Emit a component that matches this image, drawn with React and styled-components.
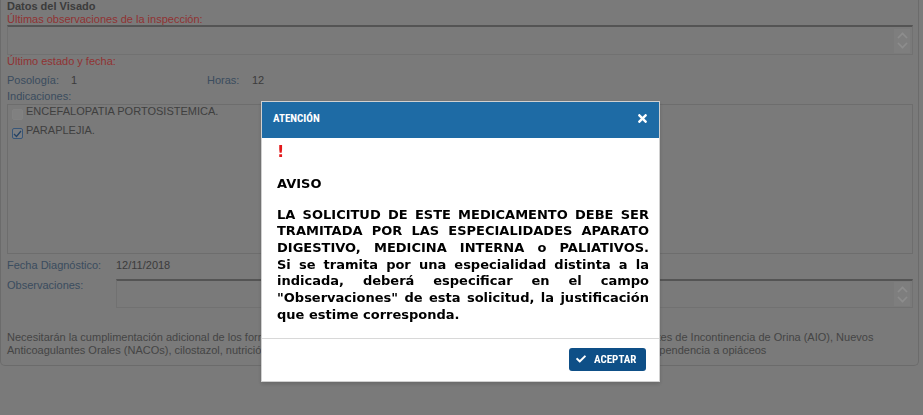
import React from 'react'
import styled, { createGlobalStyle } from 'styled-components'
import { FaTimes, FaCheck } from 'react-icons/fa'

const GlobalStyle = createGlobalStyle`
  html, body {
    margin: 0;
    padding: 0;
    background: #cbcbcb;
  }
  body {
    font-family: "Liberation Sans", Arial, sans-serif;
    font-size: 11px;
  }
  * { box-sizing: border-box; }
`

// page under the overlay
const Panel = styled.div`
  margin-right: 4px;
  border: 1px solid #b3b3b3;
  border-top: none;
  border-radius: 0 0 5px 5px;
  padding: 0 5px 8px 6px;
`

const Title = styled.div`
  font-weight: bold;
  color: #646464;
  line-height: 12px;
  margin-bottom: 1px;
`

const RedLabel = styled.div`
  color: #f05656;
  line-height: ${p => p.$lh || 13}px;
`

const TextBox = styled.div`
  height: ${p => p.$h}px;
  border: 1px solid #bdbdbd;
  border-top: 2px solid #8c8c8c;
  display: flex;
  justify-content: flex-end;
  align-items: center;
  padding: 0 2px;
`

const ScrollArrows = styled.div`
  width: 16px;
  height: 24px;
  background: #d3d3d3;
  display: flex;
  flex-direction: column;
  align-items: center;
  justify-content: center;
  gap: 3px;
  color: #ececec;
`

const Row = styled.div`
  display: flex;
  line-height: 13px;
  margin-top: ${p => p.$mt || 0}px;
`

const Cell = styled.span`
  width: ${p => (p.$w ? `${p.$w}px` : 'auto')};
  color: ${p => (p.$label ? '#63809e' : '#656565')};
`

const BlueLabel = styled.div`
  color: #63809e;
  line-height: 13px;
  margin-top: ${p => p.$mt || 0}px;
`

const IndicBox = styled.div`
  height: 150px;
  margin-top: 1px;
  border: 1px solid #b6b6b6;
  padding: 0 4px;
`

const Item = styled.div`
  display: flex;
  gap: 3px;
  height: 19px;
  line-height: 13px;
  color: #6a6a6a;
`

const Check = styled.span`
  width: 11px;
  height: 11px;
  margin-top: 4px;
  border-radius: 2px;
  border: 1px solid ${p => (p.$checked ? '#5e8fc8' : '#d9d9d9')};
  background: ${p => (p.$checked ? '#cfd3d8' : '#d6d6d6')};
  display: flex;
  align-items: center;
  justify-content: center;
  color: #3e6ea6;
`

const FormGrid = styled.div`
  display: grid;
  grid-template-columns: 109px 1fr;
  line-height: 13px;
  margin-top: ${p => p.$mt || 0}px;
`

const Note = styled.div`
  margin-top: 23px;
  line-height: 13px;
  color: #737373;
`

// modal
const Overlay = styled.div`
  position: fixed;
  inset: 0;
  background: rgba(0, 0, 0, 0.4);
`

const Modal = styled.div`
  position: absolute;
  left: 261px;
  top: 101px;
  width: 399px;
  background: #fff;
  border: 1px solid #d0d0d0;
  box-shadow: 0 2px 4px rgba(0, 0, 0, 0.15);
`

const Header = styled.div`
  height: 36px;
  background: #1e6ba5;
  color: #fff;
  display: flex;
  align-items: center;
  justify-content: space-between;
  padding: 0 10px 3px 11px;
`

const HeaderTitle = styled.span`
  font-family: "Liberation Sans Narrow", "Roboto Condensed", Roboto, sans-serif;
  font-weight: bold;
  font-size: 11px;
  line-height: 13px;
`

const Body = styled.div`
  padding: 5px 10px 14px 15px;
  border-bottom: 1px solid #d8d8d8;
  font-family: "DejaVu Sans", Verdana, sans-serif;
  font-weight: bold;
  font-size: 13px;
  line-height: 16.7px;
  color: #000;
`

const Bang = styled.div`
  font-family: "DejaVu Sans", Verdana, sans-serif;
  font-weight: bold;
  font-size: 16px;
  line-height: 18px;
  color: #e3191b;
`

const Aviso = styled.div`
  margin-top: 14.6px;
`

const Message = styled.p`
  margin: ${p => (p.$first ? '14.3px' : '0')} 0 0;
  text-align: justify;
  text-align-last: ${p => (p.$first ? 'justify' : 'auto')};
`

const Footer = styled.div`
  display: flex;
  justify-content: flex-end;
  padding: 9px 13px 10px;
`

const Button = styled.button`
  width: 77px;
  height: 23px;
  border: none;
  border-radius: 3px;
  background: #0e4f87;
  color: #fff;
  display: flex;
  align-items: center;
  gap: 8px;
  padding: 0 0 0 7px;
  font-family: "Liberation Sans Narrow", "Roboto Condensed", Roboto, sans-serif;
  font-weight: bold;
  font-size: 11px;
`

const Chevron = ({ up }) => (
  <svg width="11" height="7" viewBox="0 0 11 7">
    <polyline
      points={up ? '1,6 5.5,1.5 10,6' : '1,1 5.5,5.5 10,1'}
      fill="none"
      stroke="currentColor"
      strokeWidth="1.6"
    />
  </svg>
)

const Arrows = () => (
  <ScrollArrows>
    <Chevron up />
    <Chevron />
  </ScrollArrows>
)

export default function App() {
  return (
    <>
      <GlobalStyle />
      <Panel>
        <Title>Datos del Visado</Title>
        <RedLabel $lh={12}>Últimas observaciones de la inspección:</RedLabel>
        <TextBox $h={30}><Arrows /></TextBox>
        <RedLabel>Último estado y fecha:</RedLabel>
        <Row $mt={6}>
          <Cell $label $w={64}>Posología:</Cell>
          <Cell $w={136}>1</Cell>
          <Cell $label $w={45}>Horas:</Cell>
          <Cell>12</Cell>
        </Row>
        <BlueLabel $mt={3}>Indicaciones:</BlueLabel>
        <IndicBox>
          <Item>
            <Check />
            <span>ENCEFALOPATIA PORTOSISTEMICA.</span>
          </Item>
          <Item>
            <Check $checked>
              <svg width="9" height="8" viewBox="0 0 9 8">
                <polyline points="1,4 3.5,6.5 8,1" fill="none" stroke="currentColor" strokeWidth="1.3" />
              </svg>
            </Check>
            <span>PARAPLEJIA.</span>
          </Item>
        </IndicBox>
        <FormGrid $mt={5}>
          <Cell $label>Fecha Diagnóstico:</Cell>
          <Cell>12/11/2018</Cell>
        </FormGrid>
        <FormGrid $mt={7}>
          <Cell $label>Observaciones:</Cell>
          <TextBox $h={29}><Arrows /></TextBox>
        </FormGrid>
        <Note>
          Necesitarán la cumplimentación adicional de los formularios específicos en las solicitudes de visado de fármacos, como los Absorbentes de Incontinencia de Orina (AIO), Nuevos
          <br />
          Anticoagulantes Orales (NACOs), cilostazol, nutrición enteral domiciliaria, tiras reactivas, y medicamentos para el tratamiento de la dependencia a opiáceos
        </Note>
      </Panel>

      <Overlay>
        <Modal>
          <Header>
            <HeaderTitle>ATENCIÓN</HeaderTitle>
            <FaTimes size={13} />
          </Header>
          <Body>
            <Bang>!</Bang>
            <Aviso>AVISO</Aviso>
            <Message $first>
              LA SOLICITUD DE ESTE MEDICAMENTO DEBE SER TRAMITADA POR LAS ESPECIALIDADES APARATO
              DIGESTIVO, MEDICINA INTERNA o PALIATIVOS.
            </Message>
            <Message>
              Si se tramita por una especialidad distinta a la indicada, deberá especificar en el campo
              "Observaciones" de esta solicitud, la justificación que estime corresponda.
            </Message>
          </Body>
          <Footer>
            <Button>
              <FaCheck size={10} />
              ACEPTAR
            </Button>
          </Footer>
        </Modal>
      </Overlay>
    </>
  )
}
